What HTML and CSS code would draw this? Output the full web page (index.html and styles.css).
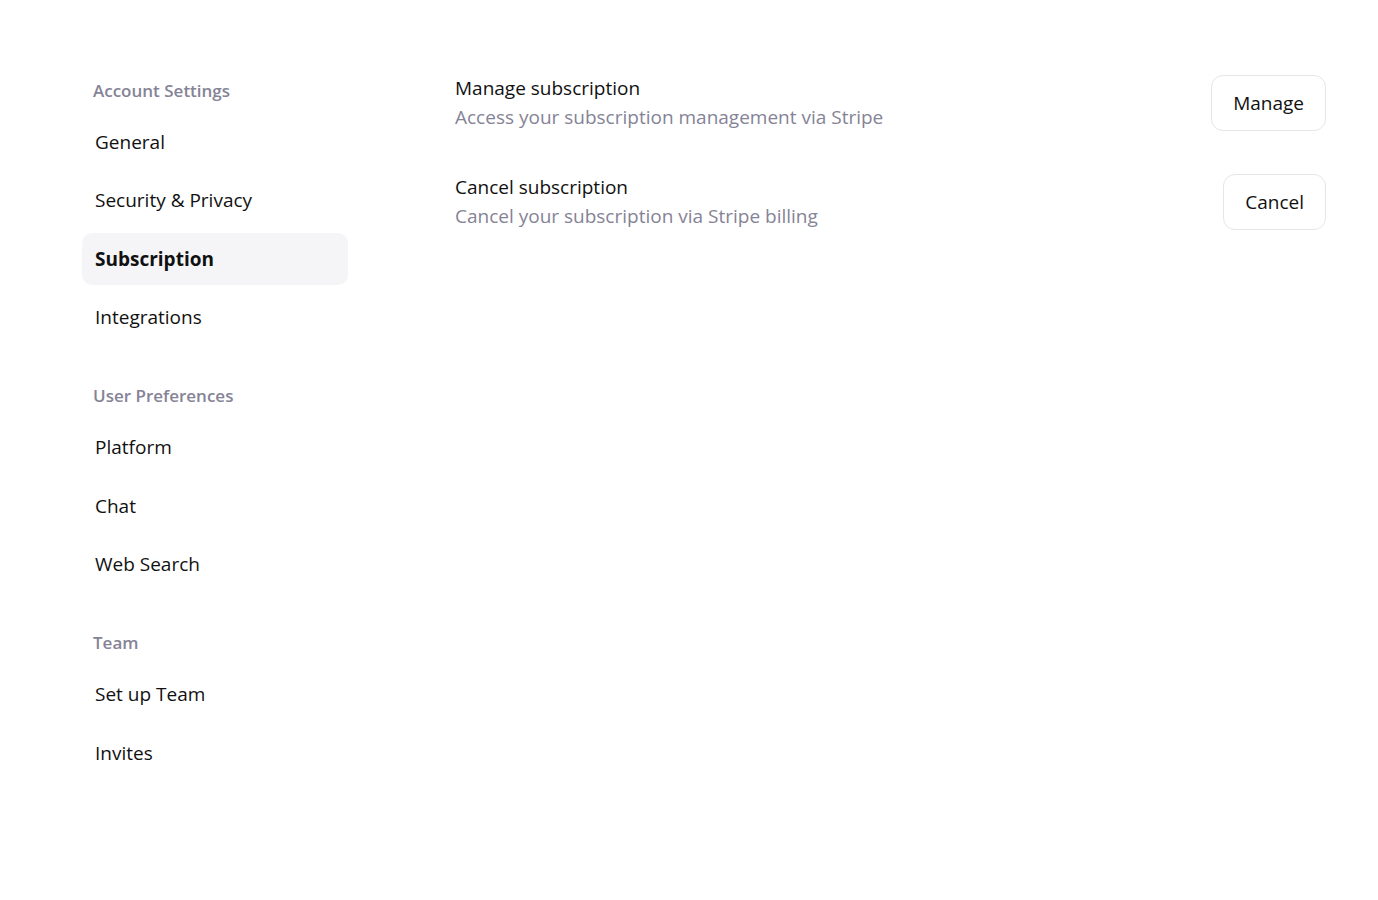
FILE: index.html
```html
<!DOCTYPE html>
<html>
<head>
<meta charset="utf-8">
<link rel="stylesheet" href="styles.css">
</head>
<body>
<div class="page">
  <nav class="sidebar">
    <div class="group">
      <div class="group-title">Account Settings</div>
      <div class="item">General</div>
      <div class="item">Security &amp; Privacy</div>
      <div class="item active">Subscription</div>
      <div class="item">Integrations</div>
    </div>
    <div class="group">
      <div class="group-title">User Preferences</div>
      <div class="item">Platform</div>
      <div class="item">Chat</div>
      <div class="item">Web Search</div>
    </div>
    <div class="group">
      <div class="group-title">Team</div>
      <div class="item">Set up Team</div>
      <div class="item">Invites</div>
    </div>
  </nav>
  <main class="content">
    <div class="row">
      <div class="text">
        <div class="title">Manage subscription</div>
        <div class="desc">Access your subscription management via Stripe</div>
      </div>
      <button class="btn">Manage</button>
    </div>
    <div class="row">
      <div class="text">
        <div class="title">Cancel subscription</div>
        <div class="desc">Cancel your subscription via Stripe billing</div>
      </div>
      <button class="btn">Cancel</button>
    </div>
  </main>
</div>
</body>
</html>
```
FILE: styles.css
```css
* { box-sizing: border-box; }
body {
  margin: 0;
  background: #fff;
  font-family: "Open Sans", "Noto Sans", sans-serif;
  color: #111;
}
.page {
  display: flex;
  padding: 78px 52px 0 82px;
  gap: 107px;
}
.sidebar {
  width: 266px;
  flex-shrink: 0;
  display: flex;
  flex-direction: column;
  gap: 40px;
}
.group {
  display: flex;
  flex-direction: column;
  gap: 6px;
}
.group-title {
  font-size: 17px;
  font-weight: 600;
  color: #858396;
  padding-left: 11px;
  line-height: 26px;
  margin-bottom: 6px;
}
.item {
  height: 52.33px;
  display: flex;
  align-items: center;
  padding-left: 13px;
  font-size: 19px;
  border-radius: 10px;
  color: #111;
}
.item.active {
  background: #f5f5f7;
  font-weight: 700;
}
.content {
  flex: 1;
  display: flex;
  flex-direction: column;
  gap: 41px;
  margin-top: -4px;
}
.row {
  display: flex;
  justify-content: space-between;
  align-items: center;
}
.title {
  font-size: 19px;
  line-height: 29px;
  color: #111;
}
.desc {
  font-size: 19px;
  line-height: 29px;
  color: #858396;
}
.btn {
  font-family: inherit;
  font-size: 19px;
  color: #111;
  background: #fff;
  border: 1px solid #e6e6ea;
  border-radius: 12px;
  height: 56px;
  padding: 0 21px;
  cursor: pointer;
}
.btn:first-of-type { }
```
